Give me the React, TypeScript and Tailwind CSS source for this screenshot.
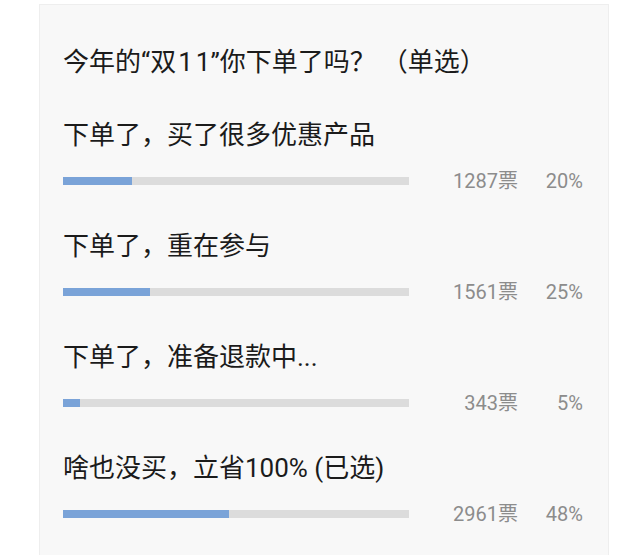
const options = [
  { label: '下单了，买了很多优惠产品', votes: 1287, pct: 20 },
  { label: '下单了，重在参与', votes: 1561, pct: 25 },
  { label: '下单了，准备退款中...', votes: 343, pct: 5 },
  { label: '啥也没买，立省100% (已选)', votes: 2961, pct: 48 },
];

export default function App() {
  return (
    <div
      className="min-h-[555px] w-[640px] overflow-hidden bg-white pt-[4px]"
      style={{ fontFamily: 'Roboto, "Noto Sans CJK SC", sans-serif' }}
    >
      <div className="ml-[39px] h-[560px] w-[570px] border border-[#eeeeee] bg-[#f8f8f8] pl-[23px] pt-[39px]">
        <h1 className="h-[36px] text-[26px] leading-[36px] font-normal text-[#1b1b1b]">
          今年的“双<span className="ml-[2px]">1</span><span className="ml-[3px]">1</span>”
          <span className="ml-[0px]">你下单了吗？</span>
          <span className="ml-[6px]">（单选）</span>
        </h1>
        <div className="mt-[37px] flex flex-col gap-[29px]">
          {options.map((o) => (
            <div key={o.label} className="flex flex-col">
              <div className="h-[36px] text-[26px] leading-[36px] text-[#1b1b1b]">{o.label}</div>
              <div className="mt-[10px] flex h-[36px] items-center">
                <div className="h-[8px] w-[346px] bg-[#dcdcdc]">
                  <div className="h-full bg-[#7aa3d8]" style={{ width: `${o.pct}%` }} />
                </div>
                <div className="w-[109px] text-right text-[20px] text-[#8c8c8c]">{o.votes}票</div>
                <div className="w-[65px] text-right text-[20px] text-[#8c8c8c]">{o.pct}%</div>
              </div>
            </div>
          ))}
        </div>
      </div>
    </div>
  );
}
